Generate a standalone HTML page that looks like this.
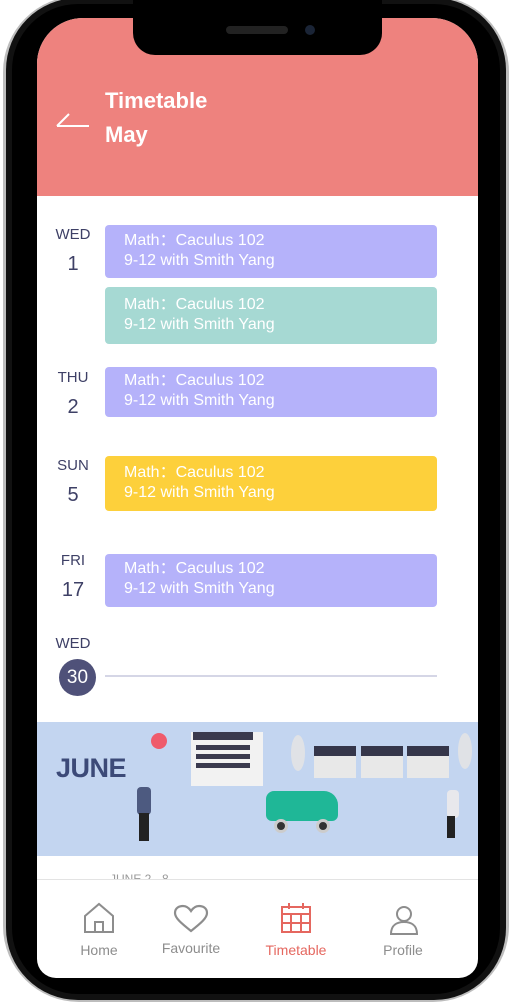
<!DOCTYPE html>
<html><head><meta charset="utf-8"><style>
*{margin:0;padding:0;box-sizing:border-box}
body{width:512px;height:1001px;background:#fff;position:relative;overflow:hidden;font-family:"Liberation Sans","Noto Sans CJK SC",sans-serif}
.a{position:absolute}
.card{position:absolute;left:105px;width:332px;border-radius:4px;color:#fff;font-size:16px;line-height:20px;padding-left:19px}
.day{position:absolute;width:50px;left:48px;text-align:center;color:#3e4066}
.day b{display:block;font-weight:normal;font-size:15px}
.day i{display:block;font-style:normal;font-size:20px;margin-top:10px}
.nav{position:absolute;top:942px;font-size:14px;color:#8d8d8d;text-align:center;width:90px}
</style></head><body>
<div class="a" style="left:3px;top:-4px;width:506px;height:1006px;border-radius:76px;background:#bdbdbd"></div>
<div class="a" style="left:6px;top:-2px;width:500px;height:1002px;border-radius:72px;background:#111"></div>
<div class="a" style="left:12px;top:4px;width:488px;height:990px;border-radius:66px;background:#000"></div>
<div class="a" style="left:37px;top:18px;width:441px;height:960px;border-radius:46px;background:#fff;overflow:hidden">
  <div class="a" style="left:0;top:0;width:441px;height:178px;background:#ee827e"></div>
  <svg class="a" style="left:18px;top:92px" width="36" height="20"><path d="M2 16 L14 4 M2 16 H34" stroke="#fff" stroke-width="2" fill="none"/></svg>
  <div class="a" style="left:68px;top:66px;color:#fff;font-weight:bold;font-size:22px;line-height:34px">Timetable<br>May</div>
</div>
<div class="a" style="left:133px;top:0;width:249px;height:55px;background:#000;border-radius:0 0 22px 22px"></div>
<div class="a" style="left:226px;top:26px;width:62px;height:8px;background:#222;border-radius:4px"></div>
<div class="a" style="left:305px;top:25px;width:10px;height:10px;background:#1a2436;border-radius:50%"></div>

<div class="day" style="top:226px"><b>WED</b><i>1</i></div>
<div class="card" style="top:225px;height:53px;background:#b5b2fa;padding-top:6px">Math：Caculus 102<br>9-12 with Smith Yang</div>
<div class="card" style="top:287px;height:57px;background:#a6d9d3;padding-top:8px">Math：Caculus 102<br>9-12 with Smith Yang</div>
<div class="day" style="top:369px"><b>THU</b><i>2</i></div>
<div class="card" style="top:367px;height:50px;background:#b5b2fa;padding-top:4px">Math：Caculus 102<br>9-12 with Smith Yang</div>
<div class="day" style="top:457px"><b>SUN</b><i>5</i></div>
<div class="card" style="top:456px;height:55px;background:#fdd03b;padding-top:7px">Math：Caculus 102<br>9-12 with Smith Yang</div>
<div class="day" style="top:552px"><b>FRI</b><i>17</i></div>
<div class="card" style="top:554px;height:53px;background:#b5b2fa;padding-top:5px">Math：Caculus 102<br>9-12 with Smith Yang</div>
<div class="day" style="top:635px"><b>WED</b></div>
<div class="a" style="left:59px;top:659px;width:37px;height:37px;border-radius:50%;background:#4f5179;color:#fff;font-size:19px;text-align:center;line-height:37px">30</div>
<div class="a" style="left:105px;top:675px;width:332px;height:2px;background:#d5d6e6"></div>

<div class="a" style="left:37px;top:722px;width:441px;height:134px;background:#c3d5f0"></div>
<div class="a" style="left:56px;top:753px;font-size:27px;font-weight:bold;color:#3c4a78;letter-spacing:-0.5px">JUNE</div>
<div class="a" style="left:151px;top:733px;width:16px;height:16px;border-radius:50%;background:#ef5b6b"></div>
<div class="a" style="left:191px;top:732px;width:72px;height:54px;background:#f2f2f2"></div>
<div class="a" style="left:193px;top:732px;width:60px;height:8px;background:#3a3a4e"></div>
<div class="a" style="left:196px;top:745px;width:54px;height:5px;background:#3a3a4e"></div>
<div class="a" style="left:196px;top:754px;width:54px;height:5px;background:#3a3a4e"></div>
<div class="a" style="left:196px;top:763px;width:54px;height:5px;background:#3a3a4e"></div>
<div class="a" style="left:291px;top:735px;width:14px;height:36px;border-radius:50%;background:#e0e2e6"></div>
<div class="a" style="left:458px;top:733px;width:14px;height:36px;border-radius:50%;background:#e0e2e6"></div>
<div class="a" style="left:314px;top:746px;width:42px;height:32px;background:#e8e8e8;border-top:10px solid #35364a"></div>
<div class="a" style="left:361px;top:746px;width:42px;height:32px;background:#e8e8e8;border-top:10px solid #35364a"></div>
<div class="a" style="left:407px;top:746px;width:42px;height:32px;background:#e8e8e8;border-top:10px solid #35364a"></div>
<div class="a" style="left:266px;top:791px;width:72px;height:30px;background:#1fb797;border-radius:8px 14px 6px 6px"></div>
<div class="a" style="left:274px;top:819px;width:14px;height:14px;border-radius:50%;background:#333;border:3px solid #ccc"></div>
<div class="a" style="left:316px;top:819px;width:14px;height:14px;border-radius:50%;background:#333;border:3px solid #ccc"></div>
<div class="a" style="left:137px;top:787px;width:14px;height:28px;background:#4d5a80;border-radius:4px"></div>
<div class="a" style="left:139px;top:813px;width:10px;height:28px;background:#222"></div>
<div class="a" style="left:447px;top:790px;width:12px;height:28px;background:#e8e8ec;border-radius:4px"></div>
<div class="a" style="left:447px;top:816px;width:8px;height:22px;background:#222"></div>

<div class="a" style="left:110px;top:872px;font-size:12px;color:#999">JUNE 2 - 8</div>
<div class="a" style="left:37px;top:879px;width:441px;height:80px;background:#fff;border-top:1px solid #e3e3e3"></div>
<div class="a" style="left:37px;top:959px;width:441px;height:19px;background:#fff;border-radius:0 0 46px 46px"></div>
<svg class="a" style="left:83px;top:902px" width="32" height="32"><path d="M2 14 L16 2 L30 14 V30 H2 Z M12 30 V20 H20 V30" stroke="#8d8d8d" stroke-width="2" fill="none"/></svg>
<svg class="a" style="left:173px;top:904px" width="36" height="30"><path d="M18 27 C8 19 2 14 2 9 C2 4 6 2 10 2 C13 2 16 4 18 7 C20 4 23 2 26 2 C30 2 34 4 34 9 C34 14 28 19 18 27 Z" stroke="#8d8d8d" stroke-width="2.2" fill="none"/></svg>
<svg class="a" style="left:280px;top:902px" width="32" height="32"><path d="M2 5 H30 V30 H2 Z M2 12 H30 M2 21 H30 M11 12 V30 M21 12 V30 M9 1 V7 M23 1 V7" stroke="#e5675f" stroke-width="2" fill="none"/></svg>
<svg class="a" style="left:389px;top:905px" width="30" height="30"><circle cx="15" cy="9" r="7" stroke="#8d8d8d" stroke-width="2" fill="none"/><path d="M2 29 C2 20 8 17 15 17 C22 17 28 20 28 29 Z" stroke="#8d8d8d" stroke-width="2" fill="none"/></svg>
<div class="nav" style="left:54px">Home</div>
<div class="nav" style="left:146px;top:940px">Favourite</div>
<div class="nav" style="left:251px;color:#e5675f">Timetable</div>
<div class="nav" style="left:358px">Profile</div>
</body></html>
